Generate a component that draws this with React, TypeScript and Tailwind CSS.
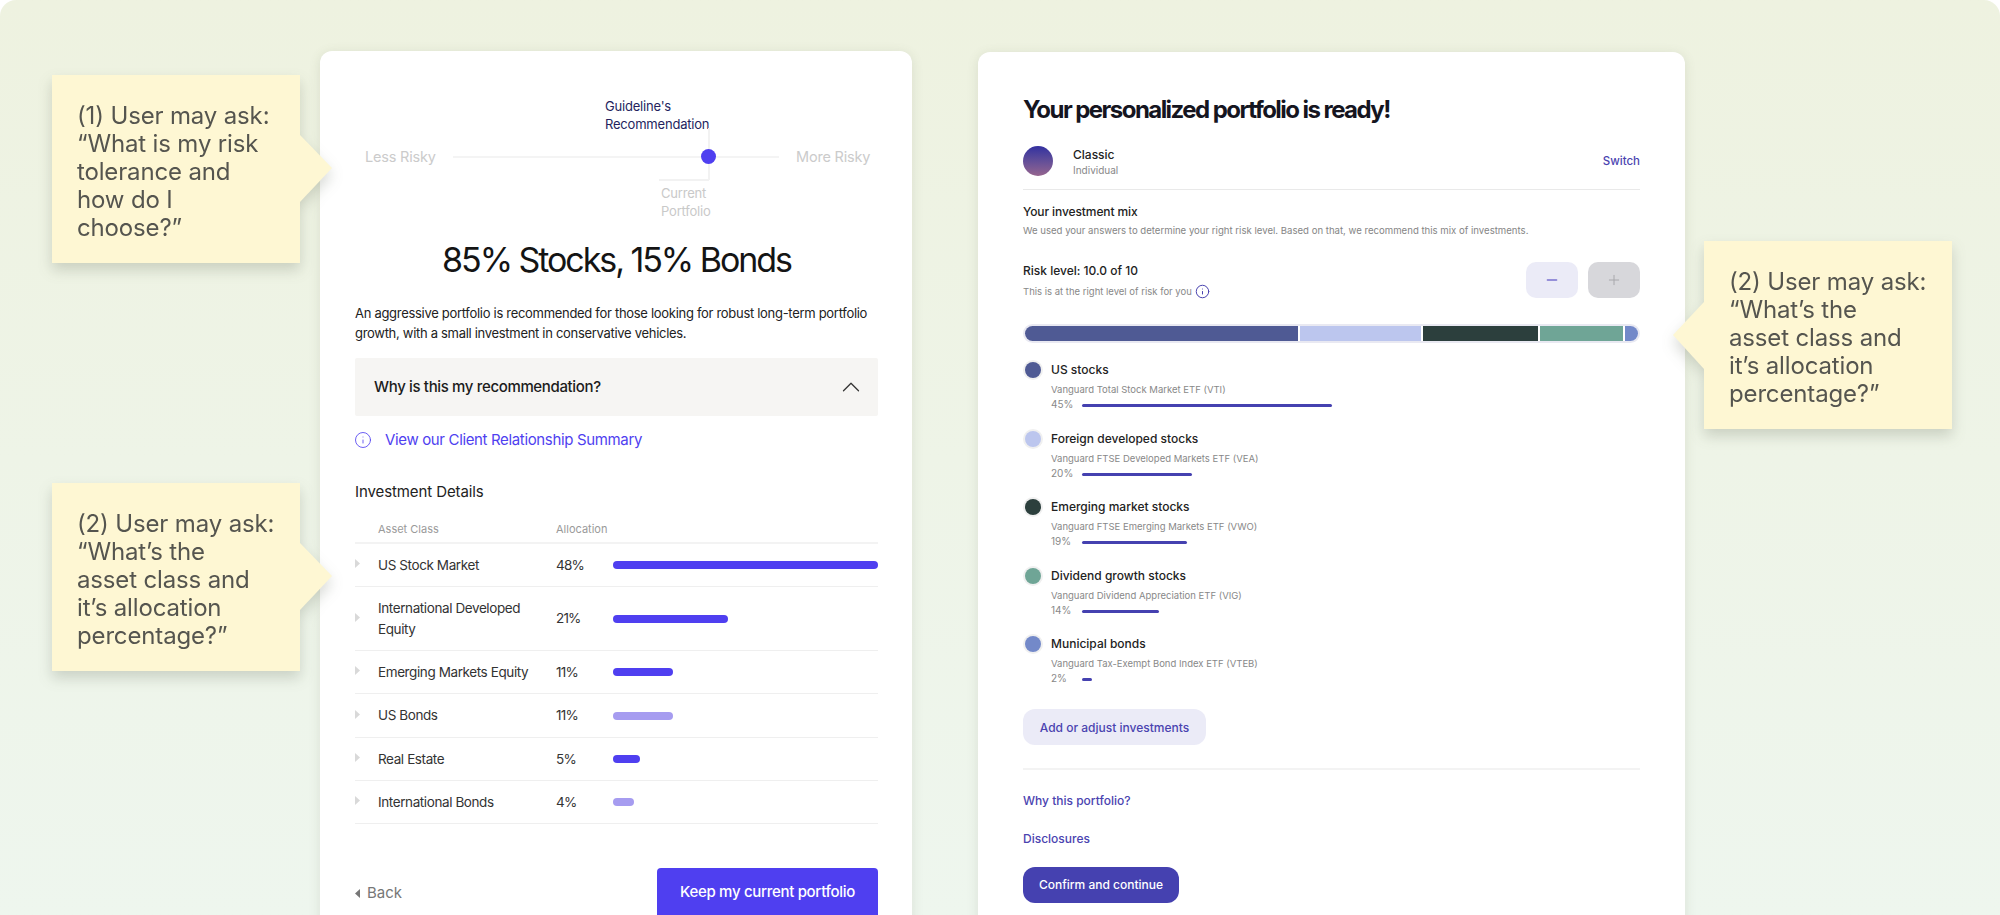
import React from "react";
import { ChevronUp, Info, Minus, Plus } from "lucide-react";

const sans = "font-['Inter','Noto_Sans',sans-serif]";

const details = [
  { name: "US Stock Market", pct: "48%", width: "w-[265px]", color: "bg-[#4f3ff0]", rowH: "h-[43px]" },
  { name: "International Developed Equity", pct: "21%", width: "w-[115px]", color: "bg-[#4f3ff0]", rowH: "h-[64px]" },
  { name: "Emerging Markets Equity", pct: "11%", width: "w-[60px]", color: "bg-[#4f3ff0]", rowH: "h-[43px]" },
  { name: "US Bonds", pct: "11%", width: "w-[60px]", color: "bg-[#a69cf0]", rowH: "h-[44px]" },
  { name: "Real Estate", pct: "5%", width: "w-[27px]", color: "bg-[#4f3ff0]", rowH: "h-[43px]" },
  { name: "International Bonds", pct: "4%", width: "w-[21px]", color: "bg-[#a69cf0]", rowH: "h-[43px]" },
];

const holdings = [
  { name: "US stocks", fund: "Vanguard Total Stock Market ETF (VTI)", pct: "45%", bar: "w-[250px]", dot: "bg-[#4f5a94]" },
  { name: "Foreign developed stocks", fund: "Vanguard FTSE Developed Markets ETF (VEA)", pct: "20%", bar: "w-[110px]", dot: "bg-[#bcc6ee]" },
  { name: "Emerging market stocks", fund: "Vanguard FTSE Emerging Markets ETF (VWO)", pct: "19%", bar: "w-[105px]", dot: "bg-[#2c3f3d]" },
  { name: "Dividend growth stocks", fund: "Vanguard Dividend Appreciation ETF (VIG)", pct: "14%", bar: "w-[77px]", dot: "bg-[#6fa596]" },
  { name: "Municipal bonds", fund: "Vanguard Tax-Exempt Bond Index ETF (VTEB)", pct: "2%", bar: "w-[10px]", dot: "bg-[#7389c9]" },
];

const Sticky = ({ lines, side, className }: { lines: string[]; side: "left" | "right"; className: string }) => (
  <div className={`relative z-10 h-[188px] w-[248px] bg-[#fef7d3] pl-[25px] pt-[27px] drop-shadow-[0_7px_7px_rgba(60,70,50,0.2)] ${className}`}>
    {lines.map((l) => (
      <div key={l} className="text-[24px] leading-[28px] tracking-[-0.15px] text-[#55554f]">
        {l}
      </div>
    ))}
    {side === "right" ? (
      <svg className="absolute left-full top-[60px]" width="33" height="67" viewBox="0 0 33 67">
        <polygon points="0,0 32,33 0,67" fill="#fef7d3" />
      </svg>
    ) : (
      <svg className="absolute right-full top-[61px]" width="31" height="67" viewBox="0 0 31 67">
        <polygon points="31,0 0,33 31,67" fill="#fef7d3" />
      </svg>
    )}
  </div>
);

const Caret = () => (
  <svg width="5" height="9" viewBox="0 0 5 9" className="mb-[3px] shrink-0">
    <polygon points="0,0 5,4.5 0,9" fill="#d9d9d9" />
  </svg>
);

const App = () => {
  return (
    <div className={`${sans} h-[915px] w-[2000px] overflow-hidden bg-white`}>
      <div className="flex h-full rounded-t-[16px] bg-gradient-to-b from-[#eef2e0] to-[#eef6ee] pl-[52px]">
        {/* Notes on the left */}
        <div className="w-[248px] shrink-0">
          <Sticky
            className="mt-[75px]"
            side="right"
            lines={["(1) User may ask:", "“What is my risk", "tolerance and", "how do I", "choose?”"]}
          />
          <Sticky
            className="mt-[220px]"
            side="right"
            lines={["(2) User may ask:", "“What’s the", "asset class and", "it’s allocation", "percentage?”"]}
          />
        </div>

        {/* Recommendation card */}
        <div className="ml-5 mt-[51px] h-[900px] w-[592px] shrink-0 rounded-t-[12px] bg-white pl-[35px] pr-[34px] pt-[46px] shadow-[0_2px_12px_rgba(90,100,70,0.14)]">
          <div className="ml-[250px] text-[13px] leading-[18px] tracking-[-0.2px] text-[#241f5e]">
            Guideline's
            <br />
            Recommendation
          </div>

          <div className="relative mt-[14px] flex h-5 items-center pl-[10px]">
            <span className="w-[88px] shrink-0 whitespace-nowrap text-[14.5px] tracking-[-0.2px] text-[#cbcbcb]">Less Risky</span>
            <div className="h-[2px] w-[326px] shrink-0 bg-[#f4f4f4]" />
            <span className="ml-[17px] whitespace-nowrap text-[14.5px] tracking-[-0.2px] text-[#cbcbcb]">More Risky</span>
            <div className="absolute left-[353px] top-[-19px] h-[52px] w-[2px] bg-[#f2f2f2]" />
            <div className="absolute left-[304px] top-[32px] h-[2px] w-[50px] bg-[#f2f2f2]" />
            <div className="absolute left-[346px] top-[2px] h-[15px] w-[15px] rounded-full bg-[#4f3ff0]" />
          </div>

          <div className="ml-[306px] mt-[18px] text-[13px] leading-[17.5px] tracking-[-0.2px] text-[#c9c9c9]">
            Current
            <br />
            Portfolio
          </div>

          <h1 className="mt-[18px] text-center text-[34px] font-normal leading-[44px] tracking-[-2.05px] text-[#141414]">
            85% Stocks, 15% Bonds
          </h1>

          <p className="mt-[21px] text-[13px] leading-[20px] tracking-[-0.3px] text-[#222]">
            An aggressive portfolio is recommended for those looking for robust long-term portfolio growth, with a small investment in conservative vehicles.
          </p>

          <div className="mt-[15px] flex h-[58px] items-center justify-between rounded-[2px] bg-[#f6f5f3] pl-[19px] pr-[12px]">
            <span className="text-[15px] font-medium tracking-[-0.35px] text-[#1c1c1c]">Why is this my recommendation?</span>
            <ChevronUp className="h-[30px] w-[30px] text-[#333]" strokeWidth={1} />
          </div>

          <div className="mt-3 flex h-6 items-center gap-[13px] text-[#4f3ff0]">
            <Info className="-ml-px h-[18px] w-[18px]" strokeWidth={1.1} />
            <span className="text-[15px] tracking-[-0.35px]">View our Client Relationship Summary</span>
          </div>

          <div className="mt-7 text-[15px] leading-6 tracking-[-0.1px] text-[#222]">Investment Details</div>

          <div className="mt-[17px] flex h-[23px] items-start border-b-2 border-[#f3f3f3] pl-[23px] text-[11px] leading-4 text-[#9a9a9a]">
            <span className="w-[178px]">Asset Class</span>
            <span>Allocation</span>
          </div>

          {details.map((row) => (
            <div key={row.name} className={`flex items-center border-b border-[#efefef] ${row.rowH}`}>
              <Caret />
              <span className="ml-[18px] w-[178px] shrink-0 pr-3 text-[13.5px] leading-[21px] tracking-[-0.4px] text-[#333]">
                {row.name}
              </span>
              <span className="w-[57px] shrink-0 text-[13.5px] tracking-[-0.8px] text-[#333]">{row.pct}</span>
              <div className={`h-2 rounded-full ${row.width} ${row.color}`} />
            </div>
          ))}

          <div className="mt-[44px] flex items-center justify-between">
            <div className="flex items-center gap-[7px] pt-px text-[15px] text-[#777]">
              <svg width="5" height="9" viewBox="0 0 5 9">
                <polygon points="5,0 0,4.5 5,9" fill="#777" />
              </svg>
              Back
            </div>
            <div className="flex h-[50px] w-[221px] items-center justify-center rounded-[4px] bg-[#4f3ff0] pb-[2px] text-[15px] font-medium tracking-[-0.3px] text-white">
              Keep my current portfolio
            </div>
          </div>
        </div>

        {/* Portfolio card */}
        <div className="ml-[66px] mt-[52px] h-[900px] w-[707px] shrink-0 rounded-t-[12px] bg-white pl-[45px] pr-[45px] pt-[42px] shadow-[0_2px_12px_rgba(90,100,70,0.14)]">
          <h2 className="text-[24px] font-bold leading-8 tracking-[-1.55px] text-[#15151f]">Your personalized portfolio is ready!</h2>

          <div className="mt-5 border-b border-[#e9e9e9] pb-[13px]">
            <div className="flex h-[30px] items-center">
              <div className="h-[30px] w-[30px] rounded-full bg-gradient-to-b from-[#332f9f] to-[#96648e]" />
              <div className="ml-5 flex-1 pt-[2px]">
                <div className="text-[12px] font-medium leading-4 text-[#222]">Classic</div>
                <div className="text-[10px] leading-[14px] text-[#888]">Individual</div>
              </div>
              <span className="pt-[2px] text-[11.5px] font-medium text-[#4a43b0]">Switch</span>
            </div>
          </div>

          <div className="mt-[13px] text-[12px] font-medium leading-[18px] tracking-[-0.1px] text-[#222]">Your investment mix</div>
          <div className="mt-[3px] text-[9.6px] leading-[14px] text-[#858585]">
            We used your answers to determine your right risk level. Based on that, we recommend this mix of investments.
          </div>

          <div className="mt-6 flex items-start justify-between">
            <div>
              <div className="text-[12px] font-medium leading-[18px] text-[#222]">Risk level: 10.0 of 10</div>
              <div className="mt-1 flex items-center gap-[3px] text-[9.5px] leading-[14px] text-[#888]">
                This is at the right level of risk for you
                <Info className="h-[15px] w-[15px] text-[#4a43b0]" strokeWidth={1.6} />
              </div>
            </div>
            <div className="flex gap-[10px]">
              <div className="flex h-9 w-[52px] items-center justify-center rounded-[10px] bg-[#ebebf7]">
                <Minus className="h-4 w-4 text-[#7a72cf]" strokeWidth={2} />
              </div>
              <div className="flex h-9 w-[52px] items-center justify-center rounded-[10px] bg-[#d7d7db]">
                <Plus className="h-4 w-4 text-[#a8a8ac]" strokeWidth={1.5} />
              </div>
            </div>
          </div>

          <div className="mt-[25px] flex h-[19px] gap-[2px] rounded-full border-2 border-[#e9e9f2] bg-white">
            <div className="w-[273px] rounded-l-full bg-[#4f5a94]" />
            <div className="w-[121px] bg-[#bcc6ee]" />
            <div className="w-[115px] bg-[#2c3f3d]" />
            <div className="w-[83px] bg-[#6fa596]" />
            <div className="flex-1 rounded-r-full bg-[#7389c9]" />
          </div>

          <div className="mt-[17px] flex flex-col gap-[17.6px]">
            {holdings.map((h) => (
              <div key={h.name} className="flex h-[51px]">
                <div className="flex h-5 w-5 shrink-0 items-center justify-center rounded-full bg-[#f0f0f0]">
                  <div className={`h-4 w-4 rounded-full ${h.dot}`} />
                </div>
                <div className="ml-2 pt-px">
                  <div className="text-[12px] font-medium leading-[18px] text-[#222]">{h.name}</div>
                  <div className="mt-1 text-[9.5px] leading-[14px] text-[#888]">{h.fund}</div>
                  <div className="flex items-center text-[10px] leading-[14px] text-[#888]">
                    <span className="w-[31px] shrink-0">{h.pct}</span>
                    <div className={`mt-[3px] h-[3px] rounded-full bg-[#4541b0] ${h.bar}`} />
                  </div>
                </div>
              </div>
            ))}
          </div>

          <div className="mt-6 flex h-9 w-[183px] items-center justify-center rounded-[12px] bg-[#ebebf7] pt-[2px] text-[12px] font-medium text-[#4a43b0]">
            Add or adjust investments
          </div>

          <div className="mt-[23px] h-[2px] bg-[#f3f3f3]" />

          <div className="mt-[23px] text-[12px] font-medium leading-4 text-[#4a43b0]">Why this portfolio?</div>
          <div className="mt-[22px] text-[12px] font-medium leading-4 text-[#4a43b0]">Disclosures</div>

          <div className="mt-5 flex h-9 w-[156px] items-center justify-center rounded-[12px] bg-[#4541b0] text-[12px] font-medium text-white">
            Confirm and continue
          </div>
        </div>

        {/* Note on the right */}
        <Sticky
          className="ml-[19px] mt-[241px]"
          side="left"
          lines={["(2) User may ask:", "“What’s the", "asset class and", "it’s allocation", "percentage?”"]}
        />
      </div>
    </div>
  );
};

export default App;
